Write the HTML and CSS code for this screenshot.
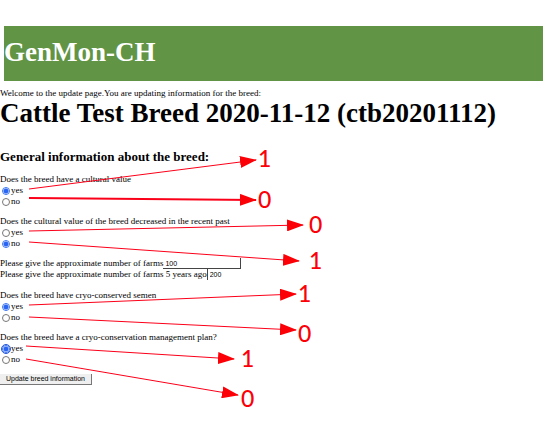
FILE: index.html
```html
<!DOCTYPE html>
<html lang="en">
<head>
<meta charset="utf-8">
<title>GenMon-CH</title>
<link rel="stylesheet" href="styles.css">
</head>
<body>
<header class="banner"><h1 class="title">GenMon-CH</h1></header>
<main class="content">
  <p class="welcome">Welcome to the update page.You are updating information for the breed:</p>
  <h1 class="title">Cattle Test Breed 2020-11-12 (ctb20201112)</h1>
  <h2 class="section-title">General information about the breed:</h2>
  <form class="form">
    <fieldset class="question">
      <legend>Does the breed have a cultural value</legend>
      <label class="option"><input type="radio" name="cultural" value="1" checked>yes</label>
      <label class="option"><input type="radio" name="cultural" value="0">no</label>
    </fieldset>
    <fieldset class="question">
      <legend>Does the cultural value of the breed decreased in the recent past</legend>
      <label class="option"><input type="radio" name="decreased" value="0">yes</label>
      <label class="option"><input type="radio" name="decreased" value="1" checked>no</label>
    </fieldset>
    <div class="farms">
      <div class="field"><label for="farms-now">Please give the approximate number of farms</label><input class="number now" id="farms-now" type="text" value="100"></div>
      <div class="field"><label for="farms-past">Please give the approximate number of farms 5 years ago</label><input class="number past" id="farms-past" type="text" value="200"></div>
    </div>
    <fieldset class="question">
      <legend>Does the breed have cryo-conserved semen</legend>
      <label class="option"><input type="radio" name="semen" value="1" checked>yes</label>
      <label class="option"><input type="radio" name="semen" value="0">no</label>
    </fieldset>
    <fieldset class="question">
      <legend>Does the breed have a cryo-conservation management plan?</legend>
      <label class="option"><input class="focused" type="radio" name="plan" value="1" checked>yes</label>
      <label class="option"><input type="radio" name="plan" value="0">no</label>
    </fieldset>
    <button class="submit" type="button">Update breed information</button>
  </form>
</main>
<svg class="notes" width="543" height="435" viewBox="0 0 543 435">
  <defs>
    <marker id="head" markerUnits="userSpaceOnUse" markerWidth="17" markerHeight="12" refX="16" refY="6" orient="auto">
      <path d="M0 0L17 6L0 12Z" fill="#fb0007"/>
    </marker>
  </defs>
  <g class="arrows">
    <path d="M29 189L256 160"/>
    <path class="thick" d="M29 198L256 200"/>
    <path d="M29 231L303 225"/>
    <path d="M29 242L299 261"/>
    <path d="M29 305L296 294"/>
    <path d="M29 317L296 330"/>
    <path d="M26 346L234 359"/>
    <path d="M26 359L238 395"/>
  </g>
  <g class="values">
    <text x="258" y="167">1</text>
    <text x="258" y="208">0</text>
    <text x="309" y="233">0</text>
    <text x="309" y="269">1</text>
    <text x="298" y="302">1</text>
    <text x="298" y="342">0</text>
    <text x="241" y="367">1</text>
    <text x="241" y="407">0</text>
  </g>
</svg>
</body>
</html>
```
FILE: styles.css
```css
* {
  box-sizing: border-box;
}

body {
  position: relative;
  min-height: 100vh;
  margin: 0;
  padding-top: 26px;
  background: #fff;
  color: #000;
  font: 9px/11px "Liberation Serif", "Times New Roman", serif;
}

.banner {
  margin-left: 4px;
  padding: 10px 0 13px;
  background: #619445;
  color: #fff;
}

.title {
  margin: 0;
  font-size: 27px;
  line-height: 32px;
  white-space: nowrap;
}

.welcome {
  margin: 7px 0 0;
}

.content .title {
  line-height: 28px;
}

.section-title {
  margin: 22px 0 9px;
  font-size: 13px;
  line-height: 16px;
}

.form {
  display: flex;
  flex-direction: column;
  align-items: flex-start;
  gap: 9px;
}

.question {
  margin: 0;
  padding: 0;
  border: 0;
  min-width: 0;
}

.question legend {
  padding: 0;
}

.option {
  display: flex;
  align-items: center;
  gap: 1px;
  height: 11px;
}

.option input {
  appearance: none;
  width: 8px;
  height: 8px;
  margin: 0 0 0 2px;
  border: 1px solid #767676;
  border-radius: 50%;
  background: #fff;
}

.option input:checked {
  border-color: #3874f5;
  background: radial-gradient(circle, #2964f2 0 2px, #fff 3px);
}

.option .focused {
  outline: 1px solid #2355d8;
}

.field {
  display: flex;
  align-items: center;
  height: 11px;
  white-space: nowrap;
}

.farms {
  padding-bottom: 1px;
}

.number {
  height: 11px;
  padding: 0 2px;
  border: 0 solid #444;
  background: transparent;
  font: 7px/10px "Liberation Sans", Arial, sans-serif;
}

.now {
  width: 78px;
  border-width: 0 1px 1px 0;
}

.past {
  width: 78px;
  border-left-width: 1px;
}

.submit {
  height: 11px;
  padding: 0 6px;
  border: solid #777;
  border-width: 0 1px 1px 0;
  background: #efefef;
  color: #000;
  font: 7px/10px "Liberation Sans", Arial, sans-serif;
}

.notes {
  position: absolute;
  top: 0;
  left: 0;
  pointer-events: none;
}

.arrows {
  fill: none;
  stroke: #fb0019;
}

.arrows path {
  marker-end: url(#head);
}

.arrows .thick {
  stroke-width: 2px;
}

.values {
  fill: #fb0007;
  font: 500 23px Lato, sans-serif;
}
```
